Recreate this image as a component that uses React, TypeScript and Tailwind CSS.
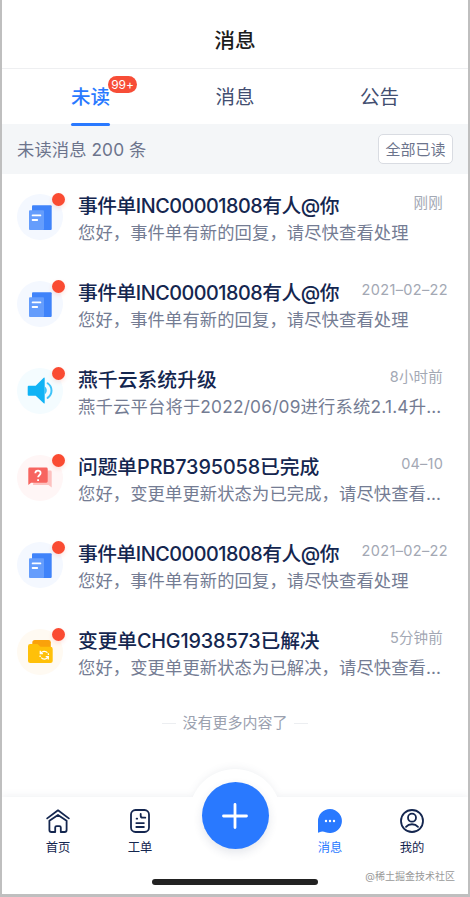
import { Fragment } from 'react'
import clsx from 'clsx'

const messages = [
  { type: 'event', title: '事件单INC00001808有人@你', content: '您好，事件单有新的回复，请尽快查看处理', time: '刚刚' },
  { type: 'event', title: '事件单INC00001808有人@你', content: '您好，事件单有新的回复，请尽快查看处理', time: '2021–02–22' },
  { type: 'system', title: '燕千云系统升级', content: '燕千云平台将于2022/06/09进行系统2.1.4升…', time: '8小时前' },
  { type: 'problem', title: '问题单PRB7395058已完成', content: '您好，变更单更新状态为已完成，请尽快查看…', time: '04–10' },
  { type: 'event', title: '事件单INC00001808有人@你', content: '您好，事件单有新的回复，请尽快查看处理', time: '2021–02–22' },
  { type: 'change', title: '变更单CHG1938573已解决', content: '您好，变更单更新状态为已解决，请尽快查看…', time: '5分钟前' },
]

const tabs = [
  { name: '未读', active: true, badge: '99+' },
  { name: '消息' },
  { name: '公告' },
]

const titleSpacing: any = {
  event: 'tracking-[-0.5px]',
  system: 'tracking-[0.05px]',
  problem: 'tracking-[-0.1px]',
  change: 'tracking-[-0.15px]',
}

const icons: any = {
  event: (
    <>
      <circle cx="23" cy="23" r="23" fill="#f4f8ff" />
      <rect x="15" y="11.3" width="19.7" height="24.6" rx="1" fill="#3f83fa" />
      <rect x="12" y="16.2" width="15" height="19.7" rx="1" fill="#659dfc" />
      <path d="M15.6 21.4h7.8M15.6 26h4.6" stroke="#fff" strokeWidth="1.8" strokeLinecap="round" />
    </>
  ),
  system: (
    <>
      <circle cx="23" cy="23" r="23" fill="#f4fcff" />
      <path d="M11.7 17.7h7l8-8q1-.7 1 .6v24.4q0 1.3-1 .6l-8-7.6h-7q-1 0-1-1v-8q0-1 1-1z" fill="#10b3f5" />
      <path d="M30.6 15.3c5.2 3.6 5.2 11 0 14.6" stroke="#3fc3f9" strokeWidth="2" strokeLinecap="round" fill="none" />
      <path d="M27.7 18.6c2.8 1.6 2.8 6 0 7.6z" fill="#3fc3f9" />
    </>
  ),
  problem: (
    <>
      <circle cx="23" cy="23" r="23" fill="#fff6f6" />
      <path d="M18 15.6h15.5q1.2 0 1.2 1.2v15.7l-3.2-2.5H16z" fill="#fdc1bf" />
      <path d="M12.7 12.6h16.6q1.4 0 1.4 1.4v12.3q0 1.4-1.4 1.4H14.1l-2.8 2.2V14q0-1.4 1.4-1.4z" fill="#f76560" />
      <path d="M18.3 18.2c.2-3.5 5.4-3.3 5.3-.1 0 2-2.5 2.2-2.5 4.2M21.1 24.2v1.7" stroke="#fff" strokeWidth="1.8" fill="none" />
    </>
  ),
  change: (
    <>
      <circle cx="23" cy="23" r="23" fill="#fffaf2" />
      <path d="M15.3 18v-4.5q0-2.5 2.5-2.5h13.7q2.3 0 2.3 2.3V20H15.3z" fill="#faa20a" />
      <path d="M13.2 15h7.3l3 2.7h10q2.2 0 2.2 2.2v12q0 2.1-2.2 2.1H13.2Q11 34 11 31.9V17.2Q11 15 13.2 15z" fill="#ffc009" />
      <path
        d="M23.8 24.3c1.2-2.3 4.8-2.7 6.6-.6M30.9 28c-1.3 2.5-4.9 2.8-6.7.6M23.3 21.8v2.8h2.6M31.3 30.6v-2.9h-2.6M31.4 24.3v1.6M23.1 26.6v1.5"
        stroke="#fff"
        strokeWidth="1.3"
        fill="none"
      />
    </>
  ),
}

const navItems = [
  {
    name: '首页',
    icon: (
      <>
        <path d="M1.2 9.4 12 1.3l10.8 8.1" />
        <path d="M3.4 11.7V21q0 2 2 2h3.8v-4.5q0-1.4 1.4-1.4h2.8q1.4 0 1.4 1.4V23h3.8q2 0 2-2v-9.3L12 5.9z" />
      </>
    ),
  },
  {
    name: '工单',
    icon: (
      <>
        <rect x="3" y="1" width="18" height="22" rx="4.5" />
        <path d="M12.7 5v1.7q0 2 2 2h2.6M8.3 14.1h7.6M8.3 18h7.6M8.6 9.7h.6" />
      </>
    ),
  },
  {
    name: '消息',
    active: true,
    icon: (
      <>
        <path d="M12 0a12 12 0 1 1-4.4 23.2Q5 22.2 2.9 22.8L0 23.8V12A12 12 0 0 1 12 0z" fill="#2979ff" stroke="none" />
        <g fill="#fff" stroke="none">
          <circle cx="8" cy="12" r="1.2" />
          <circle cx="12" cy="12" r="1.2" />
          <circle cx="16" cy="12" r="1.2" />
        </g>
      </>
    ),
  },
  {
    name: '我的',
    icon: (
      <>
        <circle cx="12" cy="12" r="11" />
        <circle cx="12" cy="8.7" r="4" />
        <path d="M6 17.8c3-3.4 9-3.4 12 0" />
      </>
    ),
  },
]

const MessageRow = ({ message }: any) => (
  <div className="flex h-[87px] pl-[15px] pt-[17px]">
    <div className="relative mt-[3px] h-[46px] w-[46px] shrink-0">
      <svg viewBox="0 0 46 46" className="h-full w-full">
        {icons[message.type]}
      </svg>
      <span className="absolute -top-[1px] right-[-1.5px] h-[13px] w-[13px] rounded-full bg-[#fa4b32] shadow-[0_2px_4px_rgba(250,75,50,0.15)]" />
    </div>
    <div className="ml-[15px] min-w-0 flex-1">
      <div className="flex justify-between">
        <h3
          className={clsx(
            'whitespace-nowrap pt-px text-[19.8px] font-medium leading-[28px] text-[#14264f]',
            titleSpacing[message.type]
          )}
        >
          {message.title}
        </h3>
        <span
          className={clsx(
            'whitespace-nowrap text-[14.5px] leading-[23px] text-[#a3a8b4]',
            message.time.length > 8 ? 'mr-[20px] tracking-[0.35px]' : 'mr-[25px] tracking-[0.2px]'
          )}
        >
          {message.time}
        </span>
      </div>
      <p
        className={clsx(
          '-mt-px whitespace-nowrap text-[17.3px] leading-[27px] text-[#747c93]',
          message.type === 'system' ? 'tracking-[0.2px]' : 'tracking-[0.12px]'
        )}
      >
        {message.content}
      </p>
    </div>
  </div>
)

const TabBar = () => (
  <nav className="relative h-[97px]">
    <div className="absolute inset-0 drop-shadow-[0_-2px_3px_rgba(30,50,90,0.06)]">
      <div className="absolute left-1/2 top-[-28px] h-[92px] w-[92px] -translate-x-1/2 rounded-full bg-white" />
      <div className="h-full bg-white" />
    </div>
    <div className="relative flex px-[15px]">
      {navItems.map((item, i) => (
        <Fragment key={item.name}>
          {i === 2 && (
            <button className="mx-[20.5px] -mt-[15px] flex h-[67px] w-[67px] items-center justify-center rounded-full bg-[#2979ff] shadow-[0_4px_10px_rgba(40,60,100,0.12)]">
              <svg viewBox="0 0 26 26" className="h-[26px] w-[26px]" stroke="#fff" strokeWidth="2.8" strokeLinecap="round">
                <path d="M13 1.5v23M1.5 13h23" />
              </svg>
            </button>
          )}
          <div className="flex w-[82px] flex-col items-center pt-[12px]">
            <svg
              viewBox="0 0 24 24"
              className="h-6 w-6"
              fill="none"
              stroke="#14264f"
              strokeWidth="1.8"
              strokeLinecap="round"
              strokeLinejoin="round"
            >
              {item.icon}
            </svg>
            <span className={clsx('mt-[6px] text-[12.3px] leading-[18px]', item.active ? 'text-[#2979ff]' : 'text-[#14264f]')}>
              {item.name}
            </span>
          </div>
        </Fragment>
      ))}
    </div>
    <div className="absolute bottom-[9px] left-1/2 h-[6px] w-[166px] -translate-x-1/2 rounded-full bg-[#222]" />
    <span className="absolute bottom-[10px] right-[13px] whitespace-nowrap text-[10px] leading-[16px] text-[#999]">
      @稀土掘金技术社区
    </span>
  </nav>
)

const App = () => {
  return (
    <div className="flex h-[897px] w-[470px] flex-col overflow-hidden border-x-2 border-b-[3px] border-[#bfbfbf] bg-white font-['Inter','Noto_Sans_CJK_SC',sans-serif]">
      <header className="flex h-[69px] shrink-0 items-end justify-center border-b border-[#eeeff1] pb-[12px] text-[20.7px] font-medium leading-[30px] text-[#1c1c1c]">
        消息
      </header>
      <div className="flex h-[55px] shrink-0 justify-center">
        {tabs.map((tab) => (
          <div key={tab.name} className="flex w-[144.5px] justify-center">
            <div
              className={clsx(
                'relative h-[57px] pt-[14px] text-[19.5px] leading-[28px]',
                tab.active ? 'font-medium text-[#2979ff]' : 'text-[#424e70]'
              )}
            >
              {tab.name}
              {tab.badge && (
                <span className="absolute left-[37px] top-[7px] flex h-[17px] w-[29px] items-center justify-center rounded-full bg-[#f74d37] text-[12px] font-normal tracking-[-0.1px] text-white">
                  {tab.badge}
                </span>
              )}
              {tab.active && <span className="absolute bottom-0 left-0 h-[3px] w-full rounded-full bg-[#2979ff]" />}
            </div>
          </div>
        ))}
      </div>
      <div className="flex h-[50px] shrink-0 items-center justify-between bg-[#f4f6f8] pl-[15px] pr-[15px]">
        <span className="pt-px text-[17.3px] tracking-[0.1px] text-[#6c748c]">未读消息 200 条</span>
        <button className="h-[30px] w-[75px] rounded-[5px] border border-[#d9dce2] bg-white pt-px text-[15px] leading-[28px] text-[#6c748c]">
          全部已读
        </button>
      </div>
      <main className="flex-1">
        {messages.map((message, i) => (
          <MessageRow key={i} message={message} />
        ))}
        <div className="mt-[16px] flex items-center justify-center gap-[6px] text-[15px] leading-[22px] text-[#9ba1af]">
          <span className="h-px w-[14px] bg-[#eceef1]" />
          没有更多内容了
          <span className="h-px w-[14px] bg-[#eceef1]" />
        </div>
      </main>
      <TabBar />
    </div>
  )
}

export default App
